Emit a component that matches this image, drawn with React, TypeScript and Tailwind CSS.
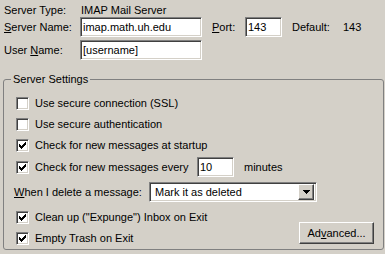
import React from "react";

const sunken =
  "border border-t-[#808080] border-l-[#808080] border-r-white border-b-white shadow-[inset_1px_1px_0_#404040,inset_-1px_-1px_0_#d4d0c8]";
const raised =
  "border border-t-white border-l-white border-r-[#404040] border-b-[#404040] shadow-[inset_-1px_-1px_0_#808080,inset_1px_1px_0_#d4d0c8]";

function Check() {
  const cols: [number, number][] = [
    [0, 2],
    [1, 3],
    [2, 4],
    [3, 3],
    [4, 2],
    [5, 1],
    [6, 0],
  ];
  return (
    <svg width="7" height="7" viewBox="0 0 7 7" shapeRendering="crispEdges" className="absolute left-[2px] top-[2px]">
      {cols.map(([x, y]) => (
        <rect key={x} x={x} y={y} width="1" height="3" fill="#000" />
      ))}
    </svg>
  );
}

function Box({ on }: { on?: boolean }) {
  return (
    <span className={`relative block h-[13px] w-[13px] shrink-0 bg-white ${sunken}`}>{on ? <Check /> : null}</span>
  );
}

function CheckRow({ on, h, children }: { on?: boolean; h: string; children: React.ReactNode }) {
  return (
    <div className={`flex items-center ${h}`}>
      <Box on={on} />
      <span className="ml-[6px] whitespace-nowrap">{children}</span>
    </div>
  );
}

function Field({ w, value }: { w: string; value: string }) {
  return (
    <div className={`flex h-[20px] items-center bg-white pl-[2px] ${w} ${sunken}`}>
      <span className="whitespace-nowrap">{value}</span>
    </div>
  );
}

export default function App() {
  return (
    <div
      className="h-[254px] w-[385px] overflow-hidden bg-[#d4d0c8] text-[11px] leading-[13px] text-black"
      style={{ fontFamily: '"Liberation Sans", Arial, sans-serif' }}
    >
      <div className="px-[4px] pt-[4px]">
        <div className="flex h-[13px] items-center">
          <span className="w-[77px]">Server Type:</span>
          <span>IMAP Mail Server</span>
        </div>
        <div className="flex h-[20px] items-center">
          <span className="w-[76px]">
            <u>S</u>erver Name:
          </span>
          <Field w="w-[122px]" value="imap.math.uh.edu" />
          <span className="ml-[10px] w-[33px]">
            <u>P</u>ort:
          </span>
          <Field w="w-[37px]" value="143" />
          <span className="ml-[10px] w-[51px]">Default:</span>
          <span>143</span>
        </div>
        <div className="mt-[3px] flex h-[20px] items-center">
          <span className="w-[76px]">
            User <u>N</u>ame:
          </span>
          <Field w="w-[122px]" value="[username]" />
        </div>
      </div>

      <div className="relative ml-[3px] mt-[19px] h-[171px] w-[381px] rounded-[3px] border border-[#808080] px-[12px] pt-[13px]">
        <span className="absolute left-[7px] top-[-7px] bg-[#d4d0c8] px-[2px]">Server Settings</span>
        <CheckRow h="h-[21px]">Use secure connection (SSL)</CheckRow>
        <CheckRow h="h-[21px]">Use secure authentication</CheckRow>
        <CheckRow on h="h-[21px]">
          Check for new messages at startup
        </CheckRow>
        <div className="flex h-[22px] items-center">
          <Box on />
          <span className="ml-[6px] w-[162px] whitespace-nowrap">Check for new messages every</span>
          <Field w="w-[37px]" value="10" />
          <span className="ml-[10px]">minutes</span>
        </div>
        <div className="ml-[-2px] mt-[4px] flex h-[20px] items-center">
          <span className="w-[135px]">
            <u>W</u>hen I delete a message:
          </span>
          <div className={`flex h-[20px] w-[168px] items-center justify-between bg-white pl-[5px] pr-[2px] ${sunken}`}>
            <span>Mark it as deleted</span>
            <span className={`flex h-[16px] w-[16px] items-center justify-center bg-[#d4d0c8] ${raised}`}>
              <svg width="7" height="4" viewBox="0 0 7 4" shapeRendering="crispEdges">
                <path d="M0 0h7v1H0zM1 1h5v1H1zM2 2h3v1H2zM3 3h1v1H3z" fill="#000" />
              </svg>
            </span>
          </div>
        </div>
        <div className="mt-[5px] flex items-start justify-between">
          <div>
            <CheckRow on h="h-[21px]">
              Clean up ("Expunge") Inbox on Exit
            </CheckRow>
            <CheckRow on h="h-[21px]">
              Empty Trash on Exit
            </CheckRow>
          </div>
          <button className={`mr-[-3px] mt-[15px] h-[22px] w-[75px] bg-[#d4d0c8] ${raised}`}>
            Ad<u>v</u>anced...
          </button>
        </div>
      </div>
    </div>
  );
}
